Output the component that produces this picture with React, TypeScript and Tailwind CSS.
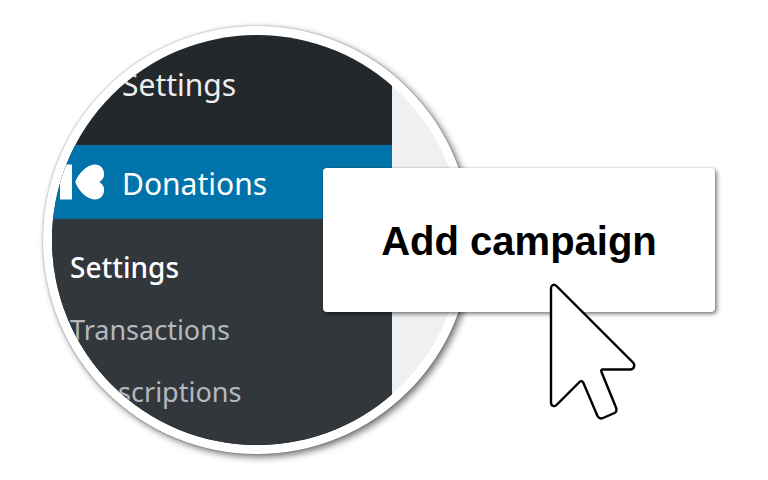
function KudosIcon() {
  return (
    <svg viewBox="0 0 44 36" className="h-9 w-11 shrink-0" fill="#fff" aria-hidden="true">
      <rect x="0" y="0.5" width="12" height="35" />
      <path d="M15.300 18C18 10 26 1.500 34 0.500C41 0 44.500 5 44 11.500C43.800 14 42 16 39.500 18C42 20 43.800 22 44 24.500C44.500 31 41 36 34 35.500C26 34.500 18 26 15.300 18Z" />
    </svg>
  );
}

function Pointer() {
  return (
    <svg
      viewBox="0 0 90 144"
      className="pointer-events-none absolute top-28 left-56 h-36 w-[90px]"
      fill="#fff"
      stroke="#000"
      strokeWidth="2.4"
      strokeLinejoin="round"
      aria-hidden="true"
    >
      <path d="M4 8.500C4 5 7 3.500 9.500 6L86 82.500C88.500 85 87 89.500 83.500 89.500H56Q53.500 89.500 54.500 92L69 127.500Q70.500 131.500 67.500 133L56 138Q52.500 139.500 50.500 136L36.200 102.500Q34.500 100 32.500 102L10 124.500C7.500 127.500 4 126 4 122.500Z" />
    </svg>
  );
}

export default function App() {
  return (
    <main className="flex min-h-screen items-center bg-white px-[43px] py-6 font-['Noto_Sans','Open_Sans',sans-serif]">
      <div className="aspect-square w-[428px] shrink-0 rounded-full bg-white p-[9px] shadow-[3px_3px_7px_rgba(0,0,0,0.55),0_0_2px_rgba(0,0,0,0.35)]">
        <div className="flex h-full overflow-hidden rounded-full bg-[#f0f0f0]">
          <nav className="flex w-[340px] flex-col bg-[#23282d]">
            <a href="#settings" className="mt-3 mb-6 flex h-[74px] items-center pl-[70px] text-[30px] text-[#eee]">
              Settings
            </a>
            <a href="#donations" className="flex h-[74px] items-center gap-[18px] bg-[#0073aa] pl-2 text-[30px] text-white">
              <KudosIcon />
              <span className="pt-0.5">Donations</span>
            </a>
            <ul className="grow bg-[#32373c] pt-[17px] pl-[18px] text-[27px] leading-[62px] text-[#b4b9be]">
              <li>
                <a href="#donation-settings" className="text-[28px] font-medium text-white">Settings</a>
              </li>
              <li>
                <a href="#transactions">Transactions</a>
              </li>
              <li>
                <a href="#subscriptions">Subscriptions</a>
              </li>
            </ul>
          </nav>
        </div>
      </div>
      <div className="relative -ml-[148px] shrink-0">
        <button
          type="button"
          className="h-36 w-[392px] rounded-[4px] bg-white pt-0.5 font-['Liberation_Sans',Arial,sans-serif] text-[40px] font-bold text-black shadow-[2px_2px_4px_rgba(0,0,0,0.5),0_0_2px_rgba(0,0,0,0.2)]"
        >
          Add campaign
        </button>
        <Pointer />
      </div>
    </main>
  );
}
